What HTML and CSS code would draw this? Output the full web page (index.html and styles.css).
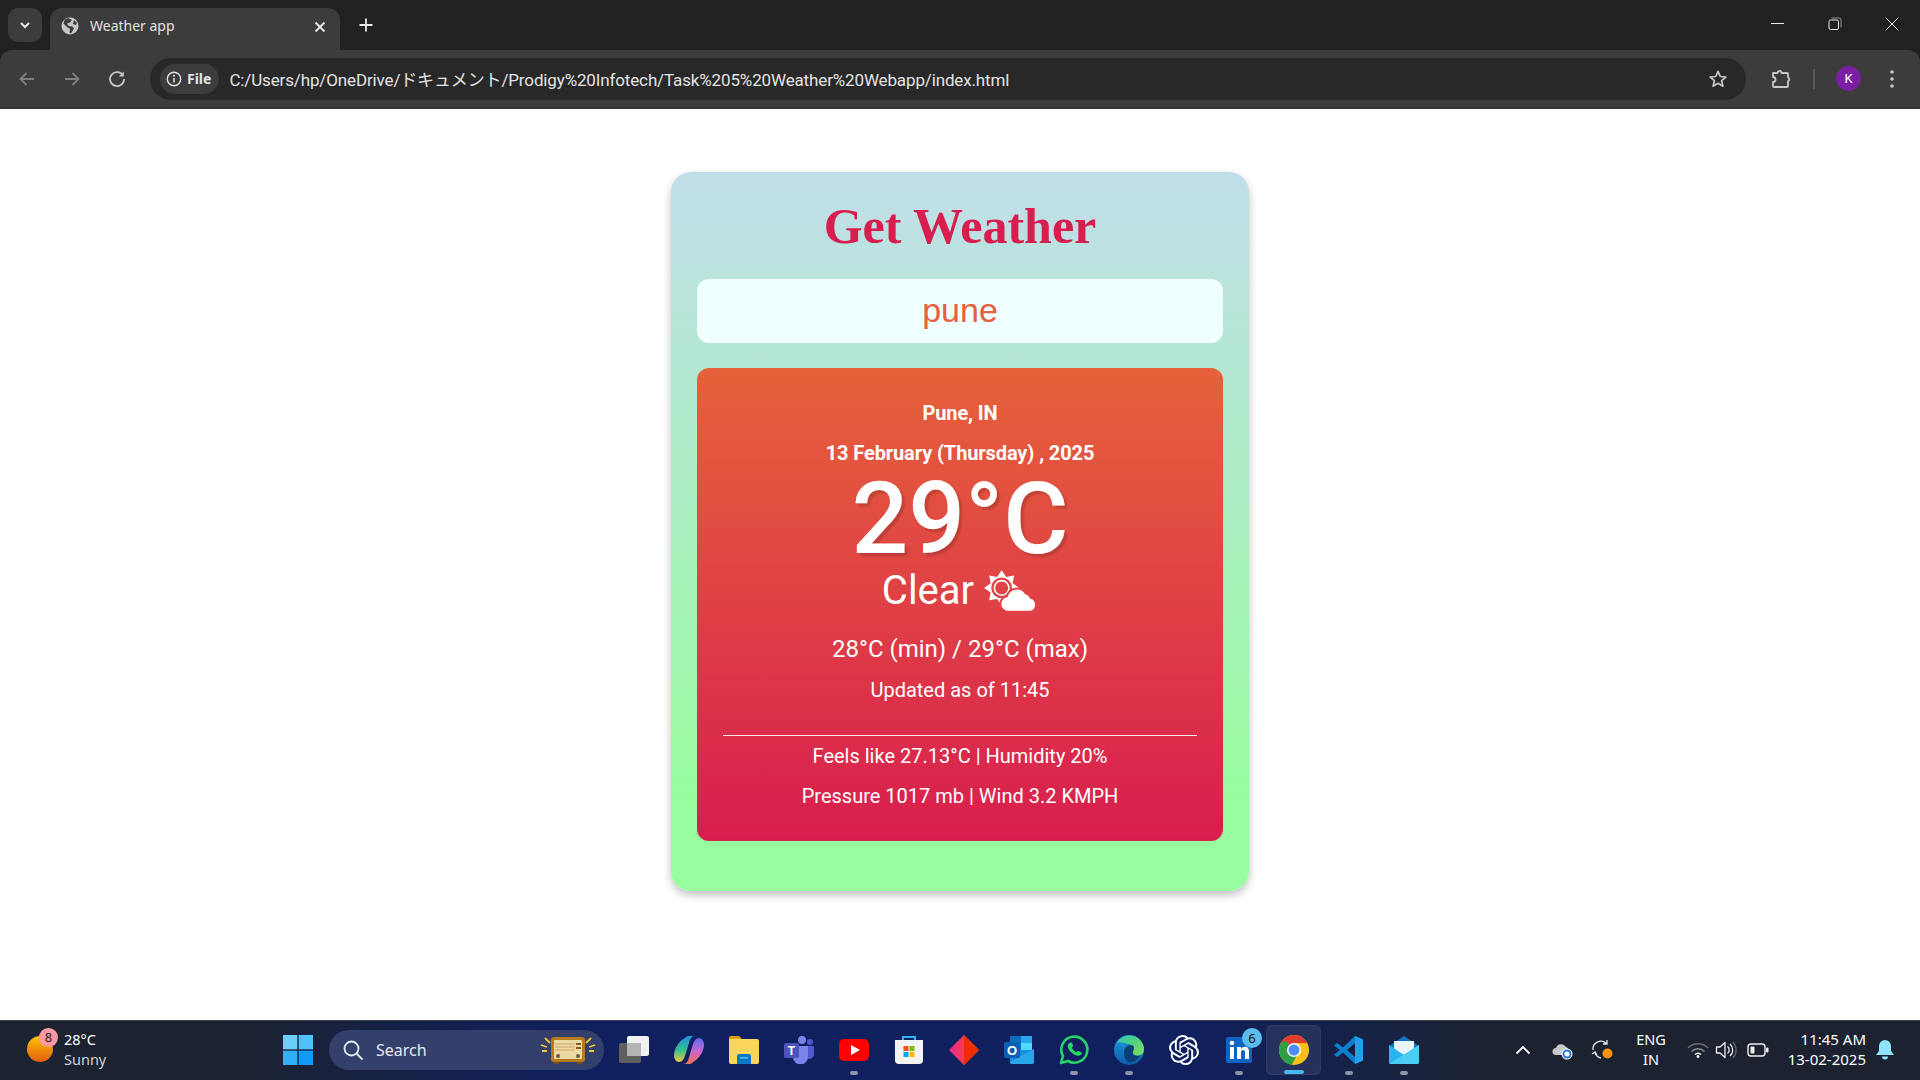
FILE: index.html
```html
<!DOCTYPE html>
<html lang="en">
<head>
    <meta charset="UTF-8">
    <meta name="viewport" content="width=device-width, initial-scale=1.0">
    <title>Weather app</title>
    <link rel="stylesheet" href="styles.css">
</head>
<body>
    <header class="browser">
        <div class="tabstrip">
            <button class="tab-menu">
                <svg width="14" height="14" viewBox="0 0 14 14"><path d="M3 5l4 4 4-4" fill="none" stroke="#e8eaed" stroke-width="2"/></svg>
            </button>
            <div class="tab">
                <svg class="favicon" width="20" height="20" viewBox="0 0 20 20"><circle cx="10" cy="10" r="8.5" fill="#c4c7c5"/><path d="M8 2l4 2-2 2.5-3 1 1.500 2.500 4 .5 1.500 2-3 5-1.500-1 .5-3.500-3-2-3.500-3.500 1-3.500z" fill="#3c3c3c"/><path d="M14 4l3 3-1 2-3-1z" fill="#3c3c3c"/></svg>
                <span class="tab-title">Weather app</span>
                <svg class="tab-close" width="14" height="14" viewBox="0 0 14 14"><path d="M2.500 2.500l9 9M11.500 2.500l-9 9" stroke="#e8eaed" stroke-width="1.800"/></svg>
            </div>
            <svg class="new-tab" width="16" height="16" viewBox="0 0 16 16"><path d="M8 1.500v13M1.500 8h13" stroke="#e8eaed" stroke-width="1.800"/></svg>
            <div class="window-controls">
                <svg width="14" height="14" viewBox="0 0 14 14"><path d="M0 6.500h13" stroke="#e8eaed" stroke-width="1"/></svg>
                <svg width="14" height="14" viewBox="0 0 14 14"><rect x="1" y="3" width="9.500" height="9.500" rx="1.500" fill="none" stroke="#e8eaed"/><path d="M3.500 1h8a1.500 1.500 0 0 1 1.500 1.500v8" fill="none" stroke="#9a9c9c"/></svg>
                <svg width="14" height="14" viewBox="0 0 14 14"><path d="M.5.500l13 13M13.500.500l-13 13" stroke="#e8eaed" stroke-width="1"/></svg>
            </div>
        </div>
        <div class="toolbar">
            <svg class="nav-btn" width="20" height="20" viewBox="0 0 20 20"><path d="M17 10H4M9.500 4L3.500 10l6 6" fill="none" stroke="#7d7f80" stroke-width="1.800"/></svg>
            <svg class="nav-btn" width="20" height="20" viewBox="0 0 20 20"><path d="M3 10h13M10.500 4l6 6-6 6" fill="none" stroke="#7d7f80" stroke-width="1.800"/></svg>
            <svg class="nav-btn" width="20" height="20" viewBox="0 0 20 20"><path d="M16 6.500A7 7 0 1 0 17 10" fill="none" stroke="#c7c7c7" stroke-width="1.800"/><path d="M16.800 2.500v5h-5z" fill="#c7c7c7"/></svg>
            <div class="omnibox">
                <div class="site-chip">
                    <svg width="16" height="16" viewBox="0 0 16 16"><circle cx="8" cy="8" r="6.700" fill="none" stroke="#e3e3e3" stroke-width="1.400"/><path d="M8 7v4.500" stroke="#e3e3e3" stroke-width="1.500"/><circle cx="8" cy="4.800" r="1" fill="#e3e3e3"/></svg>
                    <span>File</span>
                </div>
                <span class="url">C:/Users/hp/OneDrive/ドキュメント/Prodigy%20Infotech/Task%205%20Weather%20Webapp/index.html</span>
                <svg class="star" width="20" height="20" viewBox="0 0 20 20"><path d="M10 2.300l2.300 5.200 5.600.5-4.300 3.700 1.300 5.500L10 14.300l-4.900 2.900 1.300-5.500L2.100 8l5.600-.5z" fill="none" stroke="#c7c7c7" stroke-width="1.700" stroke-linejoin="round"/></svg>
            </div>
            <svg class="puzzle" width="22" height="22" viewBox="0 0 22 22"><path d="M3 5h4.500a2 2 0 0 1 4 0H17a1 1 0 0 1 1 1v3.500a1.800 1.800 0 0 1 0 3.500v5a1 1 0 0 1-1 1H4a1 1 0 0 1-1-1v-4a2.500 2.500 0 0 0 0-5z" fill="none" stroke="#c7c7c7" stroke-width="1.800" stroke-linejoin="round"/></svg>
            <span class="toolbar-sep"></span>
            <span class="avatar">K</span>
            <svg class="kebab" width="6" height="20" viewBox="0 0 6 20"><circle cx="3" cy="3" r="1.800" fill="#c7c7c7"/><circle cx="3" cy="10" r="1.800" fill="#c7c7c7"/><circle cx="3" cy="17" r="1.800" fill="#c7c7c7"/></svg>
        </div>
    </header>

    <main class="page">
        <div class="card">
            <h1>Get Weather</h1>
            <input class="search" type="text" value="pune">
            <section class="weather">
                <p class="bold">Pune, IN</p>
                <p class="bold">13 February (Thursday) , 2025</p>
                <div class="temp">29°C</div>
                <div class="condition">
                    <span>Clear</span>
                    <svg width="54" height="42" viewBox="0 0 52 40">
                        <polygon fill="#fff" points="17,0 21.400,6.400 29,5 27.600,12.600 34,17 27.600,21.400 29,29 21.400,27.600 17,34 12.600,27.600 5,29 6.400,21.400 0,17 6.400,12.600 5,5 12.600,6.400"/>
                        <circle cx="17" cy="17" r="10" fill="#e04446"/>
                        <circle cx="17" cy="17" r="7" fill="none" stroke="#fff" stroke-width="1.500"/>
                        <path d="M23 40a7.500 7.500 0 0 1-1-14.900 10 10 0 0 1 18-3 7 7 0 0 1 5 4.400A7 7 0 0 1 45 40z" fill="#fff" stroke="#e04446" stroke-width="2"/>
                    </svg>
                </div>
                <div class="minmax">28°C (min) / 29°C (max)</div>
                <p>Updated as of 11:45</p>
                <hr>
                <p>Feels like 27.13°C | Humidity 20%</p>
                <p>Pressure 1017 mb | Wind 3.2 KMPH</p>
            </section>
        </div>
    </main>

    <footer class="taskbar">
        <div class="widget">
            <span class="widget-sun"></span>
            <span class="widget-badge">8</span>
            <div class="widget-text">
                <span>28°C</span>
                <span class="muted">Sunny</span>
            </div>
        </div>
        <div class="tb-slot">
            <svg width="30" height="30" viewBox="0 0 30 30"><rect width="14.300" height="14.300" fill="#6ccffb"/><rect x="15.700" width="14.300" height="14.300" fill="#4fc1fb"/><rect y="15.700" width="14.300" height="14.300" fill="#30b0fb"/><rect x="15.700" y="15.700" width="14.300" height="14.300" fill="#0f9cf8"/></svg>
        </div>
        <div class="tb-search">
            <svg width="22" height="22" viewBox="0 0 22 22"><circle cx="9.500" cy="9.500" r="7" fill="none" stroke="#e6e9f2" stroke-width="1.800"/><path d="M14.500 14.500l6 6" stroke="#e6e9f2" stroke-width="1.800"/></svg>
            <span>Search</span>
            <svg class="radio" width="56" height="30" viewBox="0 0 56 30"><path d="M1 10l6 2M5 3l5 5M2 16h5M55 10l-6 2M51 3l-5 5M54 16h-5" stroke="#f4c430" stroke-width="1.800"/><rect x="11" y="2" width="34" height="25" rx="3" fill="#b9791d"/><rect x="14" y="5" width="28" height="19" rx="1" fill="#ecd9a4"/><path d="M15 9h20M15 12h20M15 15h20" stroke="#c9aa6c"/><rect x="36" y="8" width="5" height="2" fill="#8a5a1a"/><rect x="36" y="12" width="5" height="2" fill="#8a5a1a"/><circle cx="18" cy="21" r="2" fill="#6d5a3d"/><circle cx="38" cy="21" r="2" fill="#6d5a3d"/><rect x="14" y="27" width="5" height="2" fill="#7a4d13"/><rect x="37" y="27" width="5" height="2" fill="#7a4d13"/></svg>
        </div>
        <div class="tb-slot">
            <svg width="30" height="30" viewBox="0 0 30 30"><rect x="0" y="8" width="22" height="20" rx="2" fill="#5f5f5f"/><rect x="8" y="1" width="22" height="20" rx="2" fill="#f1f1f1"/><rect x="8" y="8" width="14" height="13" fill="#b5b5b5"/></svg>
        </div>
        <div class="tb-slot">
            <svg width="30" height="30" viewBox="0 0 30 30"><defs><linearGradient id="cop1" x1="0" y1="0" x2="0" y2="1"><stop offset="0" stop-color="#1b8fe2"/><stop offset=".55" stop-color="#35c28a"/><stop offset="1" stop-color="#f5c242"/></linearGradient><linearGradient id="cop2" x1="0" y1="0" x2="0" y2="1"><stop offset="0" stop-color="#5a6ee8"/><stop offset=".5" stop-color="#c766d8"/><stop offset="1" stop-color="#f5704a"/></linearGradient></defs><path d="M11 3c1.500-2 3-2 5-2h5c-3 0-4.500 2-5.500 5L11 21c-1 3-3 6-6 6-3 0-5-3-5-7 0-6 5-14 11-17z" fill="url(#cop1)"/><path d="M19 27c-1.500 2-3 2-5 2H9c3 0 4.500-2 5.500-5L19 9c1-3 3-6 6-6 3 0 5 3 5 7 0 6-5 14-11 17z" fill="url(#cop2)"/></svg>
        </div>
        <div class="tb-slot">
            <svg width="30" height="28" viewBox="0 0 30 28"><path d="M0 2a2 2 0 0 1 2-2h8l3 3H0z" fill="#dca311"/><path d="M0 3h28a2 2 0 0 1 2 2v21a2 2 0 0 1-2 2H2a2 2 0 0 1-2-2z" fill="#fbd65b"/><path d="M8 20a2 2 0 0 1 2-2h10a2 2 0 0 1 2 2v8H8z" fill="#0a78c9"/><rect x="11" y="21" width="8" height="1.500" fill="#5bb8ef"/></svg>
        </div>
        <div class="tb-slot">
            <svg width="30" height="28" viewBox="0 0 30 28"><circle cx="18" cy="4" r="4" fill="#7b83eb"/><circle cx="26" cy="6" r="3" fill="#5059c9"/><path d="M22 10h7a1 1 0 0 1 1 1v8a5 5 0 0 1-8 3z" fill="#5059c9"/><path d="M9 10h15v11a7.500 7.500 0 0 1-15 0z" fill="#7b83eb"/><rect y="7" width="15" height="15" rx="1.500" fill="#4b53bc"/><text class="teams-t" x="7.500" y="19">T</text></svg>
        </div>
        <div class="tb-slot has-dot">
            <svg width="30" height="22" viewBox="0 0 30 22"><rect width="30" height="22" rx="5" fill="#f00"/><path d="M12 6l9 5-9 5z" fill="#fff"/></svg>
        </div>
        <div class="tb-slot">
            <svg width="30" height="30" viewBox="0 0 30 30"><path d="M9 5V2h12v3" fill="none" stroke="#2fb5ef" stroke-width="2"/><path d="M1 5h28v20a4 4 0 0 1-4 4H5a4 4 0 0 1-4-4z" fill="#f4f4f4"/><rect x="9.500" y="11" width="5" height="5" fill="#f25022"/><rect x="15.500" y="11" width="5" height="5" fill="#7fba00"/><rect x="9.500" y="17" width="5" height="5" fill="#00a4ef"/><rect x="15.500" y="17" width="5" height="5" fill="#ffb900"/></svg>
        </div>
        <div class="tb-slot">
            <svg width="30" height="30" viewBox="0 0 30 30"><defs><linearGradient id="gem" x1="0" y1="0" x2="1" y2="0"><stop offset="0" stop-color="#f0249a"/><stop offset="1" stop-color="#f85a00"/></linearGradient></defs><path d="M15 0l15 15-15 15L0 15z" fill="url(#gem)"/><path d="M15 0l15 15-15 15z" fill="#f02c00"/></svg>
        </div>
        <div class="tb-slot">
            <svg width="30" height="30" viewBox="0 0 30 30"><rect x="6" y="1" width="22" height="14" rx="1" fill="#0f6cbd"/><rect x="17" y="1" width="11" height="7" fill="#28a8ea"/><rect x="6" y="8" width="11" height="7" fill="#0078d4"/><rect x="17" y="8" width="11" height="7" fill="#50d9ff"/><path d="M6 15h24v12a2 2 0 0 1-2 2H8a2 2 0 0 1-2-2z" fill="#1490df"/><path d="M6 27l24-13v13a2 2 0 0 1-2 2H8a2 2 0 0 1-2-2z" fill="#28a8ea"/><rect y="7" width="16" height="16" rx="2" fill="#0a5fb4"/><text class="outlook-o" x="8" y="20">O</text></svg>
        </div>
        <div class="tb-slot has-dot">
            <svg width="30" height="30" viewBox="0 0 30 30"><path d="M2 28l2-7A13 13 0 1 1 9 26z" fill="none" stroke="#25d366" stroke-width="2.600" stroke-linejoin="round"/><path d="M10.500 8c1-1 2-1 2.500 0l1 2.500c.2.800-1 1.800-1 2.500.8 1.700 2.300 3.200 4 4 .7 0 1.700-1.200 2.500-1l2.500 1.200c1 .5 1 1.500 0 2.500-1.500 1.500-4 1.500-7-.2-3-1.800-5-4-6-6.500-.7-2-.3-3.800 1.500-5z" fill="#25d366"/></svg>
        </div>
        <div class="tb-slot has-dot">
            <svg width="30" height="30" viewBox="0 0 30 30"><defs><linearGradient id="edge1" x1="0" y1="0" x2="1" y2="1"><stop offset="0" stop-color="#2ec6a4"/><stop offset="1" stop-color="#7fe05a"/></linearGradient><linearGradient id="edge2" x1="0" y1="0" x2="0" y2="1"><stop offset="0" stop-color="#1b9de2"/><stop offset="1" stop-color="#0c59a4"/></linearGradient></defs><circle cx="15" cy="15" r="15" fill="url(#edge2)"/><path d="M3 8c4-8 17-11 24-2 3 4 4 8 2 12-1 2-5 3-8 2-2-.8-3-2-2-4 1-3 0-6-4-7C10 8 6 6 3 8z" fill="url(#edge1)"/><path d="M10 17c0-4 3-7 7-7 3 0 4 3 2 6-1 3 1 5 4 5 1 0 2 0 3-.5-3 6-9 8-13 6-2-2-3-6-3-9.500z" fill="#0a3f78"/></svg>
        </div>
        <div class="tb-slot">
            <svg width="30" height="30" viewBox="0 0 24 24"><path fill="#fff" d="M22.2819 9.8211a5.9847 5.9847 0 0 0-.5157-4.9108 6.0462 6.0462 0 0 0-6.5098-2.9A6.0651 6.0651 0 0 0 4.9807 4.1818a5.9847 5.9847 0 0 0-3.9977 2.9 6.0462 6.0462 0 0 0 .7427 7.0966 5.98 5.98 0 0 0 .511 4.9107 6.051 6.051 0 0 0 6.5146 2.9001A5.9847 5.9847 0 0 0 13.2599 24a6.0557 6.0557 0 0 0 5.7718-4.2058 5.9894 5.9894 0 0 0 3.9977-2.9001 6.0557 6.0557 0 0 0-.7475-7.0729zm-9.022 12.6081a4.4755 4.4755 0 0 1-2.8764-1.0408l.1419-.0804 4.7783-2.7582a.7948.7948 0 0 0 .3927-.6813v-6.7369l2.02 1.1686a.071.071 0 0 1 .038.052v5.5826a4.504 4.504 0 0 1-4.4945 4.4944zm-9.6607-4.1254a4.4708 4.4708 0 0 1-.5346-3.0137l.142.0852 4.783 2.7582a.7712.7712 0 0 0 .7806 0l5.8428-3.3685v2.3324a.0804.0804 0 0 1-.0332.0615L9.74 19.9502a4.4992 4.4992 0 0 1-6.1408-1.6464zM2.3408 7.8956a4.485 4.485 0 0 1 2.3655-1.9728V11.6a.7664.7664 0 0 0 .3879.6765l5.8144 3.3543-2.0201 1.1685a.0757.0757 0 0 1-.071 0l-4.8303-2.7865A4.504 4.504 0 0 1 2.3408 7.872zm16.5963 3.8558L13.1038 8.364 15.1192 7.2a.0757.0757 0 0 1 .071 0l4.8303 2.7913a4.4944 4.4944 0 0 1-.6765 8.1042v-5.6772a.79.79 0 0 0-.407-.667zm2.0107-3.0231l-.142-.0852-4.7735-2.7818a.7759.7759 0 0 0-.7854 0L9.409 9.2297V6.8974a.0662.0662 0 0 1 .0284-.0615l4.8303-2.7866a4.4992 4.4992 0 0 1 6.6802 4.66zM8.3065 12.863l-2.02-1.1638a.0804.0804 0 0 1-.038-.0567V6.0742a4.4992 4.4992 0 0 1 7.3757-3.4537l-.142.0805L8.704 5.459a.7948.7948 0 0 0-.3927.6813zm1.0976-2.3654l2.602-1.4998 2.6069 1.4998v2.9994l-2.5974 1.4997-2.6067-1.4997Z"/></svg>
        </div>
        <div class="tb-slot has-dot">
            <svg width="26" height="26" viewBox="0 0 26 26"><rect width="26" height="26" rx="2" fill="#0a66c2"/><rect x="4" y="10" width="4" height="12" fill="#fff"/><circle cx="6" cy="6" r="2.300" fill="#fff"/><path d="M11 10h4v2c1-1.500 2.500-2.300 4-2.300 3 0 4 2 4 5V22h-4v-6.500c0-1.500-.5-2.500-2-2.500s-2 1-2 2.500V22h-4z" fill="#fff"/></svg>
            <span class="tb-badge">6</span>
        </div>
        <div class="tb-slot active">
            <svg width="30" height="30" viewBox="0 0 30 30"><circle cx="15" cy="15" r="15" fill="#fbc116"/><path d="M15 0a15 15 0 0 0-13 7.500L8.500 19 15 8h13A15 15 0 0 0 15 0z" fill="#e33b2e"/><path d="M2 7.500A15 15 0 0 0 12.500 29.800L19 19 8.500 19z" fill="#2c9f45"/><path d="M2 7.500L8.500 19 15 19 8 6z" fill="#2c9f45"/><circle cx="15" cy="15" r="7" fill="#fff"/><circle cx="15" cy="15" r="5.500" fill="#4a8ef5"/></svg>
        </div>
        <div class="tb-slot has-dot">
            <svg width="30" height="30" viewBox="0 0 30 30"><path d="M21 1l8 3.500v21L21 29 9 17.500 3 22l-3-2.500L6 15 0 10.500 3 8l6 4.500z" fill="#0e7fcd"/><path d="M21 1l8 3.500v21L21 29z" fill="#1fa2ee"/><path d="M21 8v14l-8-7z" fill="#12213f"/></svg>
        </div>
        <div class="tb-slot has-dot">
            <svg width="30" height="28" viewBox="0 0 30 28"><path d="M0 10L15 0l15 10v16a2 2 0 0 1-2 2H2a2 2 0 0 1-2-2z" fill="#1273c4"/><rect x="5" y="5" width="20" height="15" fill="#e9f4fb"/><path d="M0 9l15 10L30 9v17a2 2 0 0 1-2 2H2a2 2 0 0 1-2-2z" fill="#27b4ef"/><path d="M0 28L30 9v17a2 2 0 0 1-2 2z" fill="#49cdf7"/></svg>
        </div>

        <div class="tray">
            <div class="tray-slot"><svg width="16" height="10" viewBox="0 0 16 10"><path d="M1.500 8.500L8 2l6.500 6.500" fill="none" stroke="#fff" stroke-width="1.800"/></svg></div>
            <div class="tray-slot"><svg width="22" height="20" viewBox="0 0 22 20"><path d="M4 15a3.500 3.500 0 0 1 0-7 5.500 5.500 0 0 1 10-1 4 4 0 0 1 3 3l-5 5z" fill="#c9c9c9"/><circle cx="15" cy="14" r="5.500" fill="#fff"/><circle cx="15" cy="14" r="3.500" fill="none" stroke="#2a78d6" stroke-width="2"/></svg></div>
            <div class="tray-slot"><svg width="24" height="22" viewBox="0 0 24 22"><path d="M2 11a8 8 0 0 1 13-7M16 1v4h-4M4 14a8 8 0 0 0 6 5M1 15l3-2 2 3" fill="none" stroke="#e8e8e8" stroke-width="1.300"/><circle cx="16.500" cy="14.500" r="5" fill="#f9920f"/></svg></div>
            <div class="tray-lang"><span>ENG</span><span>IN</span></div>
            <div class="tray-icon"><svg width="22" height="16" viewBox="0 0 22 16"><path d="M1 6a14 14 0 0 1 20 0" fill="none" stroke="#6a6d74" stroke-width="1.400"/><path d="M4.500 9.500a9 9 0 0 1 13 0" fill="none" stroke="#8a8d94" stroke-width="1.400"/><path d="M8 12.500a4.500 4.500 0 0 1 6 0" fill="none" stroke="#fff" stroke-width="1.400"/><circle cx="11" cy="14.500" r="1.400" fill="#fff"/></svg></div>
            <div class="tray-icon"><svg width="22" height="20" viewBox="0 0 22 20"><path d="M1.500 7v6H5l5 4.500v-15L5 7z" fill="none" stroke="#eee" stroke-width="1.300" stroke-linejoin="round"/><path d="M12.500 6.500a4.500 4.500 0 0 1 0 7" fill="none" stroke="#eee" stroke-width="1.300"/><path d="M15 4a8 8 0 0 1 0 12" fill="none" stroke="#eee" stroke-width="1.300"/><path d="M18 2a12 12 0 0 1 0 16" fill="none" stroke="#61646b" stroke-width="1.300"/></svg></div>
            <div class="tray-batt"><svg width="22" height="14" viewBox="0 0 22 14"><rect x="1" y="1" width="17" height="12" rx="3" fill="none" stroke="#eee" stroke-width="1.400"/><rect x="3.500" y="3.500" width="4" height="7" rx="1" fill="#eee"/><rect x="19" y="4.500" width="2.500" height="5" rx="1" fill="#eee"/></svg></div>
            <div class="tray-clock"><span>11:45 AM</span><span>13-02-2025</span></div>
            <div class="tray-bell"><svg width="18" height="20" viewBox="0 0 18 20"><path d="M9 0a6 6 0 0 1 6 6v5l3 4H0l3-4V6a6 6 0 0 1 6-6z" fill="#8fe3fb"/><path d="M6 16.500h6a3 3 0 0 1-6 0z" fill="#8fe3fb"/></svg></div>
        </div>
    </footer>
</body>
</html>
```

FILE: styles.css
```css
* {
    box-sizing: border-box;
}
html,
body {
    height: 100%;
}
body {
    margin: 0;
    display: flex;
    flex-direction: column;
    height: 1080px;
    overflow: hidden;
    background-color: #fff;
    font-family: Roboto, sans-serif;
}

/* browser chrome */
.browser {
    flex: none;
    background-color: #202222;
}
.tabstrip {
    height: 50px;
    display: flex;
    align-items: flex-start;
    padding: 8px 0 0 8px;
}
.tab-menu {
    width: 34px;
    height: 34px;
    padding: 0;
    border: none;
    border-radius: 10px;
    background-color: #3c3c3c;
    display: flex;
    align-items: center;
    justify-content: center;
}
.tab {
    width: 290px;
    height: 42px;
    margin-left: 8px;
    padding: 0 13px 7px 10px;
    background-color: #3c3c3c;
    border-radius: 12px 12px 0 0;
    display: flex;
    align-items: center;
    color: #e3e3e3;
}
.favicon {
    flex: none;
}
.tab-title {
    margin-left: 10px;
    flex: 1;
    font-family: "Noto Sans", sans-serif;
    font-size: 14px;
}
.tab-close {
    margin-top: 3px;
}
.new-tab {
    margin: 9px 0 0 18px;
}
.window-controls {
    margin: 9px 21px 0 auto;
    display: flex;
    gap: 43px;
}
.toolbar {
    height: 59px;
    background-color: #3c3c3c;
    border-bottom: 2px solid #333;
    border-radius: 12px 12px 0 0;
    display: flex;
    align-items: center;
    padding: 0 0 0 17px;
}
.nav-btn {
    flex: none;
    margin-right: 25px;
}
.omnibox {
    width: 1596px;
    height: 42px;
    margin-left: -2px;
    padding: 0 18px 0 10px;
    background-color: #282828;
    border-radius: 21px;
    display: flex;
    align-items: center;
    color: #e3e3e3;
}
.site-chip {
    height: 30px;
    padding: 0 8px 0 6px;
    border-radius: 15px;
    background-color: #3c3c3c;
    display: flex;
    align-items: center;
    gap: 5px;
    font-family: "Noto Sans", sans-serif;
    font-size: 14px;
    font-weight: 700;
}
.url {
    margin-left: 10px;
    flex: 1;
    white-space: nowrap;
    font-family: Roboto, "Noto Sans CJK JP", sans-serif;
    font-size: 17px;
    letter-spacing: -0.14px;
}
.puzzle {
    margin-left: 24px;
}
.toolbar-sep {
    width: 2px;
    height: 20px;
    margin-left: 21px;
    background-color: #5a5a5a;
}
.avatar {
    width: 25px;
    height: 25px;
    margin-left: 21px;
    border-radius: 50%;
    background-color: #7b1fa2;
    color: #fff;
    font-size: 13px;
    display: flex;
    align-items: center;
    justify-content: center;
}
.kebab {
    margin-left: 28px;
}

/* weather app */
.page {
    flex: 1;
    display: flex;
    justify-content: center;
    align-items: flex-start;
    padding-top: 63px;
}
.card {
    width: 578px;
    height: 719px;
    padding: 24px 26px 50px;
    border-radius: 20px;
    background: linear-gradient(#c1deea, #98fd9e 88%);
    box-shadow: 0 4px 8px rgba(0, 0, 0, 0.25);
}
h1 {
    margin: 0;
    height: 83px;
    text-align: center;
    color: #d81e4f;
    font-family: "Liberation Serif", serif;
    font-size: 50px;
    line-height: 60px;
    font-weight: 700;
}
.search {
    display: block;
    width: 100%;
    height: 64px;
    padding-bottom: 3px;
    border: none;
    border-radius: 12px;
    background-color: #f0ffff;
    color: #e5603b;
    text-align: center;
    font-family: "Liberation Sans", sans-serif;
    font-size: 34px;
}
.weather {
    height: 473px;
    margin-top: 25px;
    padding: 25px 26px 0;
    border-radius: 12px;
    background: linear-gradient(#e6623a, #d81e4f);
    color: #fff;
    text-align: center;
    font-size: 20px;
}
.weather p {
    margin: 0;
    line-height: 40px;
}
.bold {
    font-weight: 700;
    letter-spacing: -0.1px;
}
.temp {
    height: 92px;
    font-size: 100px;
    font-weight: 500;
    line-height: 92px;
    text-shadow: 3px 3px 2px rgba(0, 0, 0, 0.15);
}
.condition {
    height: 48px;
    margin-top: 2px;
    font-size: 40px;
    line-height: 48px;
    display: flex;
    justify-content: center;
    align-items: center;
    gap: 10px;
}
.minmax {
    margin-top: 12px;
    height: 43px;
    font-size: 24px;
    line-height: 44px;
}
.weather hr {
    margin: 25px 0 0;
    border: none;
    border-top: 1px solid #fff;
    opacity: 0.9;
}

/* taskbar */
.taskbar {
    flex: none;
    position: relative;
    height: 60px;
    padding-bottom: 2px;
    display: flex;
    align-items: center;
    border-top: 1px solid #3a3f4b;
    background: linear-gradient(90deg, #1c2230 0%, #1c2230 12%, #10205e 30%, #10205e 62%, #1c2230 78%, #1c2230 100%);
    color: #fff;
    font-family: "Noto Sans", sans-serif;
}
.widget {
    position: relative;
    width: 270px;
    height: 100%;
    padding-left: 64px;
    display: flex;
    align-items: center;
}
.widget-sun {
    position: absolute;
    left: 27px;
    top: 15px;
    width: 26px;
    height: 26px;
    border-radius: 50%;
    background: linear-gradient(#fdc400, #e25d12);
}
.widget-badge {
    position: absolute;
    left: 39px;
    top: 7px;
    width: 19px;
    height: 19px;
    border-radius: 50%;
    background-color: #ff9aa2;
    color: #222;
    font-size: 13px;
    line-height: 19px;
    text-align: center;
}
.widget-text {
    margin-top: -2px;
    display: flex;
    flex-direction: column;
    font-size: 14.500px;
    line-height: 20px;
}
.muted {
    color: #cfd2d8;
}
.tb-slot {
    position: relative;
    flex: none;
    width: 55px;
    height: 50px;
    display: flex;
    align-items: center;
    justify-content: center;
    border-radius: 6px;
}
.tb-search {
    flex: none;
    width: 275px;
    height: 40px;
    margin: 0 2px 0 4px;
    padding: 0 8px 0 13px;
    border-radius: 20px;
    background-color: #34406c;
    display: flex;
    align-items: center;
    gap: 12px;
    color: #e6e9f2;
    font-size: 16px;
}
.radio {
    margin-left: auto;
}
.has-dot::after,
.active::after {
    content: "";
    position: absolute;
    left: 50%;
    bottom: 0;
    width: 8px;
    height: 4px;
    margin-left: -4px;
    border-radius: 2px;
    background-color: #8d93a6;
}
.active {
    background-color: rgba(255, 255, 255, 0.08);
    border: 1px solid rgba(255, 255, 255, 0.05);
}
.active::after {
    width: 20px;
    margin-left: -10px;
    background-color: #46b9f5;
}
.tb-badge {
    position: absolute;
    left: 31px;
    top: 3px;
    width: 20px;
    height: 20px;
    border-radius: 50%;
    background-color: #5bbcf0;
    color: #111;
    font-size: 13px;
    line-height: 20px;
    text-align: center;
}
.teams-t {
    fill: #fff;
    font-family: "Liberation Sans", sans-serif;
    font-size: 12px;
    font-weight: 700;
    text-anchor: middle;
}
.outlook-o {
    fill: #fff;
    font-family: "Liberation Sans", sans-serif;
    font-size: 13px;
    font-weight: 700;
    text-anchor: middle;
}
.tray {
    margin-left: auto;
    padding-right: 16px;
    display: flex;
    align-items: center;
}
.tray-slot {
    width: 40px;
    display: flex;
    justify-content: center;
}
.tray-lang {
    width: 56px;
    margin-top: -1px;
    margin-right: 5px;
    display: flex;
    flex-direction: column;
    align-items: center;
    font-size: 14.500px;
    line-height: 20px;
}
.tray-icon {
    width: 28px;
    display: flex;
    justify-content: center;
}
.tray-batt {
    width: 36px;
    display: flex;
    justify-content: center;
}
.tray-clock {
    width: 90px;
    margin-top: -2px;
    display: flex;
    flex-direction: column;
    align-items: flex-end;
    font-size: 15px;
    line-height: 20px;
    white-space: nowrap;
}
.tray-bell {
    width: 38px;
    display: flex;
    justify-content: center;
}
```
